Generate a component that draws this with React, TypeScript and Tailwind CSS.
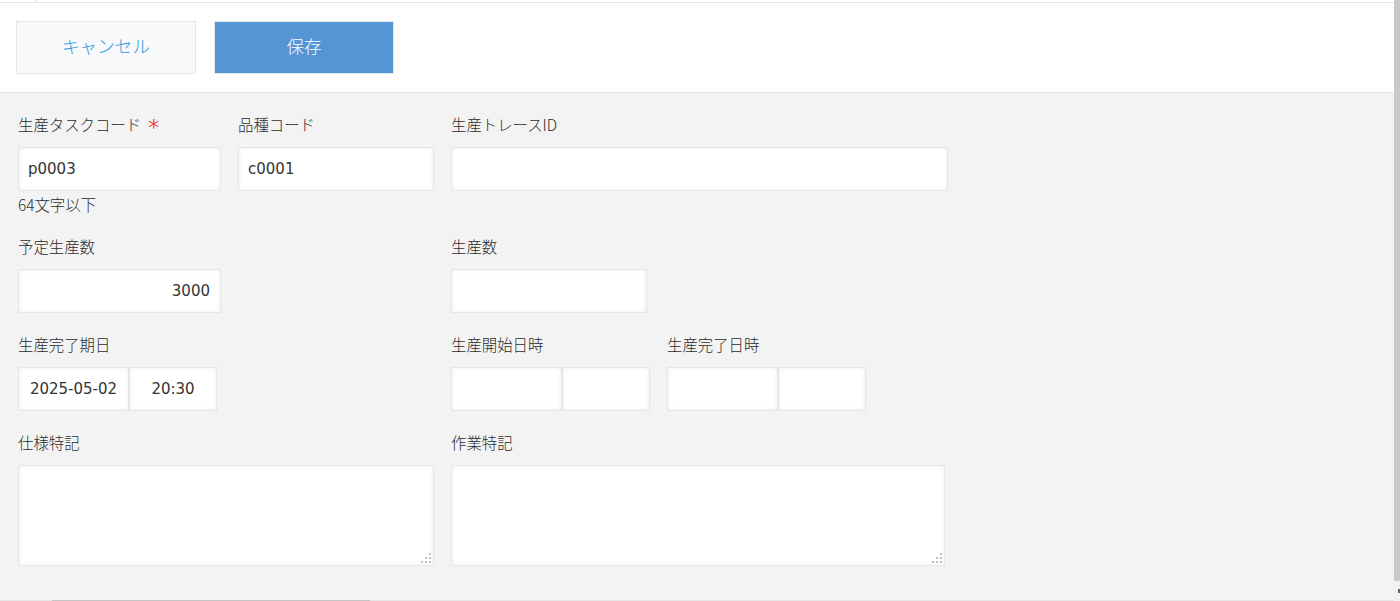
import React from "react";

const font = "font-['DejaVu_Sans','Noto_Sans_CJK_JP',sans-serif]";
const labelFont = "font-['Noto_Sans_CJK_JP',sans-serif]";

function Label({ text, required }: { text: string; required?: boolean }) {
  return (
    <div className={`${labelFont} flex h-[20px] items-start mb-[11px] text-[15.4px] font-light leading-[17px] text-[#2b2b2b]`}>
      <span>{text}</span>
      {required && (
        <span className={`${font} ml-[7px] font-normal text-[22px] leading-[20px] text-[#e74c3c] mt-[2px]`}>*</span>
      )}
    </div>
  );
}

function TextBox({
  value,
  width,
  align = "left",
}: {
  value?: string;
  width: string;
  align?: "left" | "right" | "center";
}) {
  const alignClass =
    align === "right" ? "text-right pr-[10px]" : align === "center" ? "text-center" : "text-left pl-[9px]";
  return (
    <input
      readOnly
      defaultValue={value ?? ""}
      className={`${width} ${alignClass} ${font} h-[44px] border border-[#e3e7e8] bg-white text-[15px] text-[#333] outline-none shadow-[inset_0_0_4px_rgba(0,0,0,0.07)]`}
    />
  );
}

function DateTime({ date, time }: { date?: string; time?: string }) {
  return (
    <div className="flex">
      <TextBox value={date} width="w-[111px]" align="center" />
      <TextBox value={time} width="w-[88px]" align="center" />
    </div>
  );
}

function Memo({ width }: { width: string }) {
  return (
    <div className={`relative ${width} h-[101px]`}>
      <textarea
        readOnly
        className={`${font} block h-full w-full resize-none border border-[#e3e7e8] bg-white text-[15px] outline-none shadow-[inset_0_0_4px_rgba(0,0,0,0.07)]`}
      />
      <svg className="absolute right-[2px] bottom-[2px]" width="12" height="12" viewBox="0 0 12 12">
        <g fill="#bdbdbd">
          <rect x="9" y="1" width="2" height="2" />
          <rect x="5" y="5" width="2" height="2" />
          <rect x="9" y="5" width="2" height="2" />
          <rect x="1" y="9" width="2" height="2" />
          <rect x="5" y="9" width="2" height="2" />
          <rect x="9" y="9" width="2" height="2" />
        </g>
      </svg>
    </div>
  );
}

export default function App() {
  return (
    <div className={`${font} flex h-[601px] w-full overflow-hidden bg-white`}>
      <div className="flex flex-1 flex-col">
        {/* top strip */}
        <div className="h-[2px] bg-white">
          <div className="ml-[35px] h-[2px] w-[1px] bg-[#d8d8d8]" />
        </div>
        <div className="h-[1px] bg-[#e3e3e3]" />

        {/* header actions */}
        <div className="flex gap-[18px] border-b border-[#e3e7e8] bg-white px-[16px] py-[18px]">
          <button className="h-[53px] w-[180px] border border-[#e3e7e8] bg-[#f7f9fa] text-[17.6px] font-light text-[#3498db]">
            キャンセル
          </button>
          <button className="h-[53px] w-[180px] border border-[#e3e7e8] bg-[#5395d5] text-[17.6px] font-light text-white">
            保存
          </button>
        </div>

        {/* form */}
        <div className="flex flex-1 flex-col bg-[#f3f3f3] pl-[18px] pt-[23px]">
          {/* row 1 */}
          <div className="flex gap-[17px]">
            <div className="flex w-[203px] flex-col">
              <Label text="生産タスクコード" required />
              <TextBox value="p0003" width="w-[203px]" />
              <div className={`${labelFont} mt-[5px] h-[20px] text-[15.4px] font-light leading-[17px] text-[#2b2b2b]`}>
                64文字以下
              </div>
            </div>
            <div className="flex w-[196px] flex-col">
              <Label text="品種コード" />
              <TextBox value="c0001" width="w-[196px]" />
            </div>
            <div className="flex flex-col">
              <Label text="生産トレースID" />
              <TextBox width="w-[497px]" />
            </div>
          </div>

          {/* row 2 */}
          <div className="mt-[22px] flex gap-[17px]">
            <div className="flex w-[416px] flex-col">
              <Label text="予定生産数" />
              <TextBox value="3000" width="w-[203px]" align="right" />
            </div>
            <div className="flex flex-col">
              <Label text="生産数" />
              <TextBox width="w-[196px]" />
            </div>
          </div>

          {/* row 3 */}
          <div className="mt-[23px] flex gap-[17px]">
            <div className="flex w-[416px] flex-col">
              <Label text="生産完了期日" />
              <DateTime date="2025-05-02" time="20:30" />
            </div>
            <div className="flex flex-col">
              <Label text="生産開始日時" />
              <DateTime />
            </div>
            <div className="flex flex-col">
              <Label text="生産完了日時" />
              <DateTime />
            </div>
          </div>

          {/* row 4 */}
          <div className="mt-[23px] flex gap-[17px]">
            <div className="flex w-[416px] flex-col">
              <Label text="仕様特記" />
              <Memo width="w-[416px]" />
            </div>
            <div className="flex flex-col">
              <Label text="作業特記" />
              <Memo width="w-[494px]" />
            </div>
          </div>
        </div>

        {/* bottom edge with horizontal scroll thumb */}
        <div className="h-[1px] bg-[#e6e6e6]">
          <div className="ml-[52px] h-[1px] w-[318px] bg-[#c4c4c4]" />
        </div>
      </div>

      {/* vertical scrollbar */}
      <div className="flex w-[6px] flex-col bg-[#f1f1f1]">
        <div className="h-[581px] bg-[#c9c9c9]" />
        <div className="flex flex-1 items-center justify-end">
          <div className="h-[4px] w-[2px] bg-[#666]" />
        </div>
      </div>
    </div>
  );
}
